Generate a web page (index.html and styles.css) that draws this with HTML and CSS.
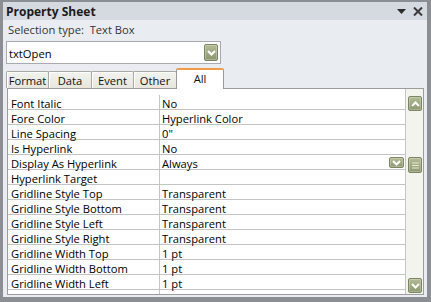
FILE: index.html
```html
<!DOCTYPE html>
<html>
<head>
<meta charset="utf-8">
<link rel="stylesheet" href="styles.css">
</head>
<body>
<div class="frame">
  <div class="titlebar">
    <span class="title">Property Sheet</span>
    <span class="tb-icons">
      <svg class="tb-tri" width="9" height="5" viewBox="0 0 9 5"><path d="M0 0H9L4.5 5Z" fill="#2b2b2b"/></svg>
      <svg class="tb-x" width="10" height="9" viewBox="0 0 10 9"><path d="M1 0.5L9 8.5M9 0.5L1 8.5" stroke="#3a3a3a" stroke-width="2"/></svg>
    </span>
  </div>
  <div class="content">
    <div class="seltype">Selection type:&nbsp; Text Box</div>
    <div class="combo">
      <span class="combo-text">txtOpen</span>
      <span class="gbtn combo-btn"><svg width="9" height="6" viewBox="0 0 9 6"><path d="M1 1L4.5 4.5L8 1" fill="none" stroke="#fff" stroke-width="2"/></svg></span>
    </div>
    <div class="tabs">
      <div class="tab t-format">Format</div>
      <div class="tab t-data">Data</div>
      <div class="tab t-event">Event</div>
      <div class="tab t-other">Other</div>
      <div class="tab active t-all">All</div>
    </div>
    <div class="panel">
      <div class="grid">
        <div class="row"><div class="lbl">Font Italic</div><div class="val">No</div></div>
        <div class="row"><div class="lbl">Fore Color</div><div class="val">Hyperlink Color</div></div>
        <div class="row"><div class="lbl">Line Spacing</div><div class="val">0"</div></div>
        <div class="row"><div class="lbl">Is Hyperlink</div><div class="val">No</div></div>
        <div class="row"><div class="lbl">Display As Hyperlink</div><div class="val">Always<span class="gbtn row-btn"><svg width="9" height="6" viewBox="0 0 9 6"><path d="M1 1L4.5 4.5L8 1" fill="none" stroke="#fff" stroke-width="2"/></svg></span></div></div>
        <div class="row"><div class="lbl">Hyperlink Target</div><div class="val"></div></div>
        <div class="row"><div class="lbl">Gridline Style Top</div><div class="val">Transparent</div></div>
        <div class="row"><div class="lbl">Gridline Style Bottom</div><div class="val">Transparent</div></div>
        <div class="row"><div class="lbl">Gridline Style Left</div><div class="val">Transparent</div></div>
        <div class="row"><div class="lbl">Gridline Style Right</div><div class="val">Transparent</div></div>
        <div class="row"><div class="lbl">Gridline Width Top</div><div class="val">1 pt</div></div>
        <div class="row"><div class="lbl">Gridline Width Bottom</div><div class="val">1 pt</div></div>
        <div class="row"><div class="lbl">Gridline Width Left</div><div class="val">1 pt</div></div>
        <div class="row"><div class="lbl"></div><div class="val"></div></div>
      </div>
      <div class="scrollbar">
        <span class="gbtn sb-btn sb-up"><svg width="9" height="6" viewBox="0 0 9 6"><path d="M1 5L4.5 1.5L8 5" fill="none" stroke="#fff" stroke-width="2"/></svg></span>
        <span class="gbtn sb-thumb"><svg width="7" height="7" viewBox="0 0 7 7"><path d="M0 1H7M0 3.5H7M0 6H7" stroke="#e8ecd8" stroke-width="1"/></svg></span>
        <span class="gbtn sb-btn sb-down"><svg width="9" height="6" viewBox="0 0 9 6"><path d="M1 1L4.5 4.5L8 1" fill="none" stroke="#fff" stroke-width="2"/></svg></span>
      </div>
    </div>
  </div>
</div>
</body>
</html>
```
FILE: styles.css
```css
* { box-sizing: border-box; }
html, body { margin: 0; padding: 0; }
body {
  width: 431px;
  height: 302px;
  overflow: hidden;
  font-family: "Open Sans", "Noto Sans", sans-serif;
  font-size: 11.2px;
  color: #000;
}
.frame {
  width: 431px;
  height: 302px;
  background: #e9edf2;
  border-style: solid;
  border-color: #8b8e93;
  border-width: 2px 4px 5px 3px;
  display: flex;
  flex-direction: column;
}
.titlebar {
  height: 18px;
  flex: none;
  background: #d5d9e0;
  display: flex;
  align-items: center;
  justify-content: space-between;
  padding: 0 4px 0 3px;
}
.title {
  font-weight: bold;
  font-size: 12px;
  color: #1b1b1b;
}
.tb-icons { display: flex; align-items: center; gap: 7px; }
.tb-tri { margin-top: 1px; }
.content {
  flex: 1;
  display: flex;
  flex-direction: column;
  padding-left: 3px;
}
.seltype {
  height: 16px;
  margin-top: 2px;
  padding-left: 2px;
  line-height: 16px;
  color: #333;
}
.combo {
  margin-top: 3px;
  width: 215px;
  height: 23px;
  background: #fff;
  border: 1px solid #a7abb0;
  display: flex;
  align-items: center;
  justify-content: space-between;
  padding: 0 2px 0 2px;
}
.combo-text { padding-top: 1px; }
.gbtn {
  display: flex;
  align-items: center;
  justify-content: center;
  background: linear-gradient(#b2bb95, #8d9870);
  border: 1px solid #7b8561;
  border-radius: 2px;
  box-shadow: inset 0 0 0 1px rgba(255,255,255,0.25);
}
.combo-btn { width: 14px; height: 17px; }
.tabs {
  margin-top: 4px;
  height: 20px;
  display: flex;
  align-items: flex-end;
  position: relative;
  z-index: 1;
}
.tab {
  height: 17px;
  margin-right: -1px;
  background: linear-gradient(#f3f3ee, #e6e6de);
  border: 1px solid #a9a9a3;
  border-bottom: none;
  border-radius: 2px 2px 0 0;
  box-shadow: inset 1px 1px 0 #fff;
  display: flex;
  align-items: center;
  justify-content: center;
  line-height: 15px;
  padding-top: 1px;
  color: #111;
}
.t-format { width: 43px; }
.t-data { width: 44px; }
.t-event { width: 43px; }
.t-other { width: 44px; }
.tab.active {
  width: 48px;
  height: 21px;
  margin-bottom: -1px;
  background: #fff;
  border-top: 2px solid #f09a48;
  border-left-color: #9a9a9a;
  border-right-color: #9a9a9a;
  box-shadow: none;
  align-items: flex-start;
  padding-top: 1px;
}
.panel {
  margin-left: 1px;
  width: 417px;
  height: 207px;
  background: #fff;
  border: 1px solid #9c9c9c;
  display: flex;
  overflow: hidden;
}
.grid {
  width: 398px;
  padding-top: 6px;
  border-right: 1px solid #c4c4c4;
  overflow: hidden;
}
.row {
  height: 15px;
  display: flex;
  border-bottom: 1px solid #c4c4c4;
  line-height: 15px;
}
.lbl {
  width: 152px;
  flex: none;
  padding-left: 3px;
  padding-top: 1px;
  border-right: 1px solid #c4c4c4;
  white-space: nowrap;
}
.val {
  flex: 1;
  padding-left: 2px;
  padding-top: 1px;
  display: flex;
  align-items: flex-start;
  justify-content: space-between;
  padding-right: 1px;
  white-space: nowrap;
}
.row-btn { width: 15px; height: 11px; margin-top: 1px; }
.scrollbar {
  width: 17px;
  flex: none;
  background: #f4f4ef;
  display: flex;
  flex-direction: column;
  padding: 7px 0 1px 2px;
}
.sb-btn { width: 14px; height: 15px; }
.sb-thumb { width: 14px; height: 16px; margin-top: 46px; }
.sb-down { margin-top: auto; }
```
